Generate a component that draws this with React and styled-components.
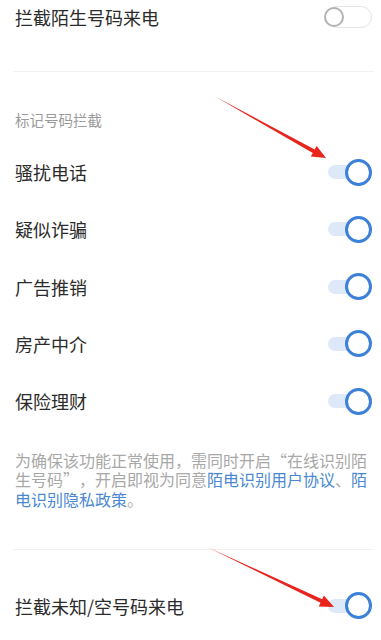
import styled, { createGlobalStyle } from "styled-components";

const GlobalStyle = createGlobalStyle`
  html, body {
    margin: 0;
    padding: 0;
    background: #ffffff;
  }
  body {
    font-family: "Noto Sans CJK SC", "Noto Sans", sans-serif;
  }
`;

const Page = styled.div`
  position: relative;
  width: 381px;
  height: 640px;
  overflow: hidden;
  background: #ffffff;
  padding: 0 9px 0 15px;
  box-sizing: border-box;
`;

const Row = styled.div`
  display: flex;
  align-items: center;
  justify-content: space-between;
  height: ${(p) => p.$height || 57.25}px;
  margin-top: ${(p) => p.$top || 0}px;
`;

const Label = styled.span`
  font-size: 18px;
  color: #2b2b2b;
  line-height: 1;
`;

const Divider = styled.div`
  height: 1px;
  background: #f1f1f1;
  margin: ${(p) => p.$top}px -2px 0 -2px;
`;

const SectionHeader = styled.div`
  margin-top: 38px;
  margin-bottom: 13.5px;
  font-size: 14.5px;
  line-height: 20px;
  color: #9a9a9a;
`;

const Note = styled.p`
  margin: 21px 0 0 0;
  padding-right: 1px;
  font-size: 16px;
  line-height: 19.5px;
  color: #a8a8a8;
  text-spacing-trim: space-all;
  text-autospace: no-autospace;
  line-break: strict;
`;

const Link = styled.span`
  color: #4a88d2;
`;

const SwitchTrack = styled.div`
  position: relative;
  width: 46px;
  height: ${(p) => (p.$on ? 14 : 22)}px;
  box-sizing: border-box;
  border-radius: 12px;
  background: ${(p) => (p.$on ? "transparent" : "#ffffff")};
  border: ${(p) => (p.$on ? "none" : "1.5px solid #e4e4e4")};
`;

const OnFill = styled.div`
  position: absolute;
  left: 2px;
  top: 0;
  width: 34px;
  height: 14px;
  border-radius: 7px;
  background: #dde9f8;
`;

const Knob = styled.div`
  position: absolute;
  box-sizing: border-box;
  border-radius: 50%;
  background: #ffffff;
  ${(p) =>
    p.$on
      ? `
    width: 27px;
    height: 27px;
    right: 0;
    top: -6.5px;
    border: 3px solid #3d80d8;
  `
      : `
    width: 20px;
    height: 20px;
    left: -3px;
    top: -0.5px;
    border: 2.5px solid #b3b3b3;
  `}
`;

const Switch = ({ on }) => (
  <SwitchTrack $on={on}>
    {on && <OnFill />}
    <Knob $on={on} />
  </SwitchTrack>
);

const Overlay = styled.svg`
  position: absolute;
  left: 0;
  top: 0;
  pointer-events: none;
`;

function arrowPoints(x1, y1, x2, y2) {
  const len = Math.hypot(x2 - x1, y2 - y1);
  const dx = (x2 - x1) / len;
  const dy = (y2 - y1) / len;
  const nx = -dy;
  const ny = dx;
  const head = 14;
  const bx = x2 - dx * head;
  const by = y2 - dy * head;
  const pts = [
    [x1, y1],
    [bx + nx * 2, by + ny * 2],
    [bx + nx * 6, by + ny * 6],
    [x2, y2],
    [bx - nx * 6, by - ny * 6],
    [bx - nx * 2, by - ny * 2],
  ];
  return pts.map((p) => p.map((v) => v.toFixed(1)).join(",")).join(" ");
}

const marked = ["骚扰电话", "疑似诈骗", "广告推销", "房产中介", "保险理财"];

export default function App() {
  return (
    <>
      <GlobalStyle />
      <Page>
        <Row $height={34}>
          <Label>拦截陌生号码来电</Label>
          <Switch on={false} />
        </Row>
        <Divider $top={37} />
        <SectionHeader>标记号码拦截</SectionHeader>
        {marked.map((name) => (
          <Row key={name}>
            <Label>{name}</Label>
            <Switch on />
          </Row>
        ))}
        <Note>
          为确保该功能正常使用，需同时开启“在线识别陌生号码”，开启即视为同意
          <Link>陌电识别用户协议</Link>、<Link>陌电识别隐私政策</Link>。
        </Note>
        <Divider $top={40} />
        <Row $top={27} $height={57}>
          <Label>拦截未知/空号码来电</Label>
          <Switch on />
        </Row>
        <Overlay width="381" height="640" viewBox="0 0 381 640">
          <polygon points={arrowPoints(216, 97, 326, 158)} fill="#e8241c" />
          <polygon points={arrowPoints(207, 547, 334, 607)} fill="#e8241c" />
        </Overlay>
      </Page>
    </>
  );
}
